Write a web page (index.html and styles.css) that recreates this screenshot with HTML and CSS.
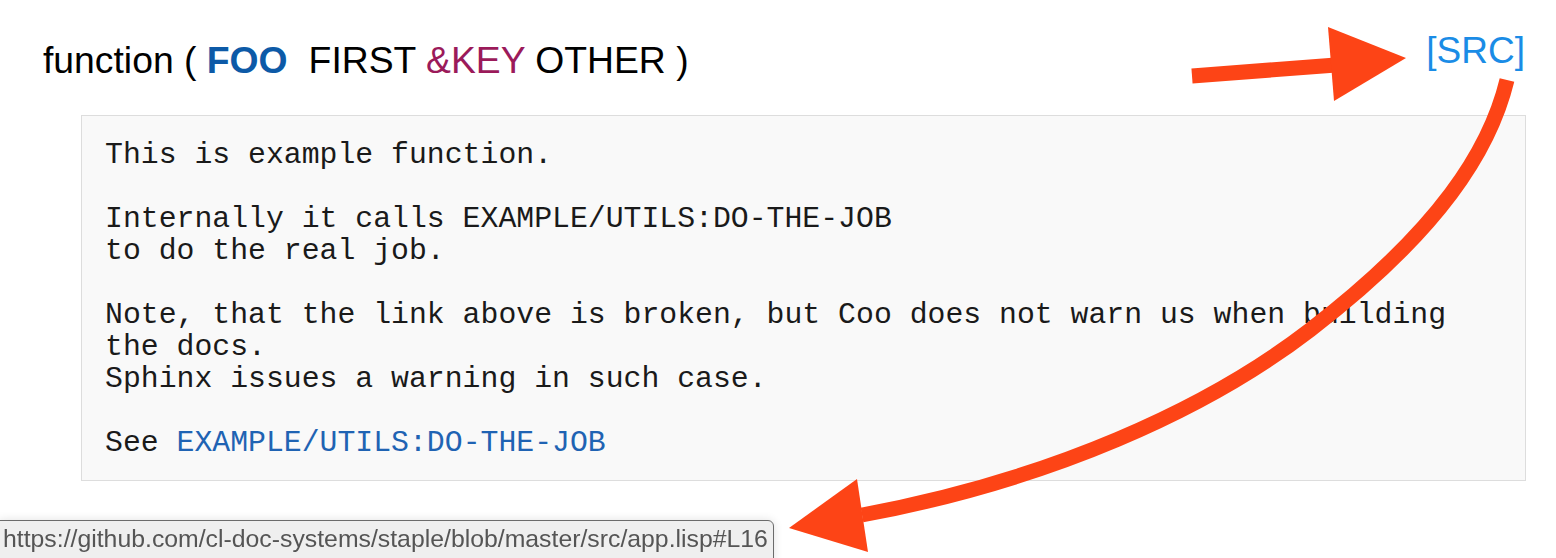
FILE: index.html
```html
<!DOCTYPE html>
<html lang="en">
<head>
<meta charset="utf-8">
<title>FOO</title>
<link rel="stylesheet" href="styles.css">
</head>
<body>
<div class="page">
  <header class="sig">
    <h1 class="sig-title">function ( <span class="sig-name">FOO</span><span class="sig-gap"></span>FIRST <span class="sig-kw">&amp;KEY</span> OTHER )</h1>
    <a class="src-link" href="#">[SRC]</a>
  </header>
  <pre class="doc">This is example function.

Internally it calls EXAMPLE/UTILS:DO-THE-JOB
to do the real job.

Note, that the link above is broken, but Coo does not warn us when building
the docs.
Sphinx issues a warning in such case.

See <a class="doc-link" href="#">EXAMPLE/UTILS:DO-THE-JOB</a></pre>
</div>
<div class="status">https://github.com/cl-doc-systems/staple/blob/master/src/app.lisp#L16</div>
<svg class="annot" width="1556" height="558" viewBox="0 0 1556 558" xmlns="http://www.w3.org/2000/svg">
  <line x1="1192" y1="76" x2="1336" y2="65" stroke="#fd4416" stroke-width="15"/>
  <polygon points="1328,27 1406,58 1334,101" fill="#fd4416"/>
  <path d="M1507,80 C1490,150 1440,230 1310,330 C1206,410 1050,480 862,515" fill="none" stroke="#fd4416" stroke-width="15"/>
  <polygon points="857,479 789,528 868,552" fill="#fd4416"/>
</svg>
</body>
</html>
```

FILE: styles.css
```css
html, body {
  margin: 0;
  padding: 0;
  background: #ffffff;
}

.page {
  width: 1556px;
  height: 558px;
  overflow: hidden;
}

.sig {
  display: flex;
  justify-content: space-between;
  align-items: flex-start;
  padding: 0 31px 0 43px;
  height: 115px;
  box-sizing: border-box;
}

.sig-title {
  margin: 0;
  padding-top: 39px;
  font-family: "Liberation Sans", Arial, sans-serif;
  font-size: 37.3px;
  font-weight: normal;
  line-height: 42px;
  color: #000;
  white-space: nowrap;
}

.sig-name {
  font-weight: bold;
  color: #0d5aa7;
}

.sig-gap {
  display: inline-block;
  width: 21px;
}

.sig-kw {
  color: #9b1a5a;
}

.src-link {
  padding-top: 30px;
  font-family: "Liberation Sans", Arial, sans-serif;
  font-size: 37px;
  line-height: 42px;
  color: #1a8ce6;
  text-decoration: none;
}

.doc {
  margin: 0 30px 0 81px;
  padding: 23px 23px 21px 23px;
  background: #f9f9f9;
  border: 1px solid #dddddd;
  font-family: "Liberation Mono", "Courier New", monospace;
  font-size: 29.8px;
  line-height: 32px;
  color: #1a1a1a;
  white-space: pre;
}

.doc-link {
  color: #1f63b3;
  text-decoration: none;
}

.status {
  position: fixed;
  left: -1px;
  bottom: -6px;
  height: 40px;
  padding: 2px 5px 0 3px;
  background: #efefef;
  border: 1px solid #6b6b6b;
  border-top-right-radius: 6px;
  box-shadow: 0 0 10px rgba(0, 0, 0, 0.12);
  font-family: "Liberation Sans", Arial, sans-serif;
  font-size: 24.8px;
  line-height: 32px;
  color: #555555;
  white-space: nowrap;
}

.annot {
  position: absolute;
  left: 0;
  top: 0;
  pointer-events: none;
}
```
